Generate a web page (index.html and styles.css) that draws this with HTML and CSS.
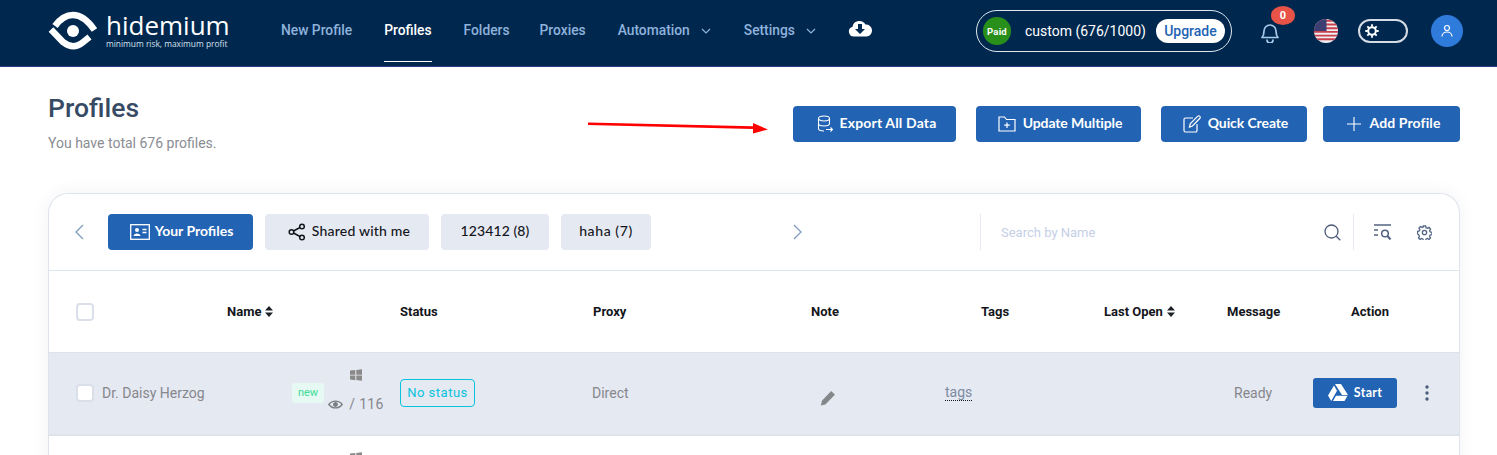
FILE: index.html
```html
<!DOCTYPE html>
<html lang="en">
<head>
<meta charset="utf-8">
<title>Profiles</title>
<link rel="stylesheet" href="styles.css">
</head>
<body>
<header class="topbar">
  <a class="logo">
    <svg class="logo-mark" width="50" height="40" viewBox="0 0 50 40"><path d="M7 15 Q15 4 25 4 Q36 4 46.500 19" fill="none" stroke="#fff" stroke-width="6.500"/><path d="M3 18.500 L15 31 Q25 39 34 32 L41.500 26" fill="none" stroke="#fff" stroke-width="6.500"/><circle cx="25" cy="20" r="6" fill="#fff"/></svg>
    <span class="logo-text"><span class="logo-name">hidemium</span><span class="logo-tag">minimum risk, maximum profit</span></span>
  </a>
  <nav class="nav">
    <a class="nav-item">New Profile</a>
    <a class="nav-item active">Profiles</a>
    <a class="nav-item nav-tight">Folders</a>
    <a class="nav-item">Proxies</a>
    <a class="nav-item nav-wide">Automation<svg class="caret" width="10" height="6" viewBox="0 0 10 6"><path d="M1 1l4 4 4-4" fill="none" stroke="#8fb3dc" stroke-width="1.200"/></svg></a>
    <a class="nav-item">Settings<svg class="caret" width="10" height="6" viewBox="0 0 10 6"><path d="M1 1l4 4 4-4" fill="none" stroke="#8fb3dc" stroke-width="1.200"/></svg></a>
    <svg class="cloud" width="24" height="17" viewBox="0 0 24 17"><path d="M6 16.500a5 5 0 0 1-1.500-9.800A7 7 0 0 1 17.500 4.500 6 6 0 0 1 18.500 16.500z" fill="#fff"/><path d="M10 4h4v5h3l-5 5-5-5h3z" fill="#002a52"/></svg>
  </nav>
  <div class="plan">
    <span class="paid">Paid</span>
    <span class="plan-text">custom (676/1000)</span>
    <span class="upgrade">Upgrade</span>
  </div>
  <div class="bell">
    <svg width="20" height="22" viewBox="0 0 20 22"><path d="M2 16.500c1.500-1.500 2-3 2-6.500a6 6 0 0 1 12 0c0 3.500.5 5 2 6.500z M7 19a3 3 0 0 0 6 0" fill="none" stroke="#a9c9ea" stroke-width="1.700" stroke-linejoin="round" stroke-linecap="round"/></svg>
    <span class="badge">0</span>
  </div>
  <svg class="flag" width="24" height="24" viewBox="0 0 24 24"><defs><clipPath id="flagclip"><circle cx="12" cy="12" r="12"/></clipPath></defs><g clip-path="url(#flagclip)"><rect width="24" height="24" fill="#f1eef0"/><path d="M0 1.800h24M0 5.500h24M0 9.200h24M0 12.900h24M0 16.600h24M0 20.300h24" stroke="#c8404f" stroke-width="1.900"/><rect width="12.500" height="12" fill="#3d3f72"/></g></svg>
  <div class="theme">
    <svg width="14" height="14" viewBox="0 0 14 14"><circle cx="7" cy="7" r="3.800" fill="#00284f" stroke="#fff" stroke-width="2"/><path d="M7 .3v2.400M7 11.300v2.400M.3 7h2.400M11.300 7h2.400M2.300 2.300l1.700 1.700M10 10l1.700 1.700M2.300 11.700l1.700-1.700M10 4l1.700-1.700" stroke="#fff" stroke-width="1.800"/></svg>
  </div>
  <span class="avatar"><svg width="14" height="14" viewBox="0 0 14 14"><circle cx="7" cy="4" r="2.500" fill="none" stroke="#fff" stroke-width="1.200"/><path d="M2 12.500c0-6 10-6 10 0" fill="none" stroke="#fff" stroke-width="1.200"/></svg></span>
</header>

<main class="page">
  <section class="page-head">
    <div class="title-block">
      <h1 class="title">Profiles</h1>
      <p class="subtitle">You have total 676 profiles.</p>
    </div>
    <div class="actions">
      <button class="btn btn-export"><svg width="16" height="18" viewBox="0 0 16 18" fill="none" stroke="#fff" stroke-width="1.100"><ellipse cx="7" cy="3.500" rx="5.500" ry="2.500"/><path d="M1.500 3.500v10c0 1.400 2.500 2.500 5.500 2.500M12.500 3.500v5M1.500 8.500c0 1.400 2.500 2.500 5.500 2.500s5.500-1.100 5.500-2.500"/><path d="M9 14.500h6.500M13.500 12.500l2 2-2 2"/></svg><span class="label">Export All Data</span></button>
      <button class="btn btn-update"><svg width="18" height="16" viewBox="0 0 18 16" fill="none" stroke="#fff" stroke-width="1.200"><path d="M1 15V1h5.500l2 2.500H17V15z"/><path d="M9 6.500v5.500M6.200 9.200h5.600"/></svg><span class="label">Update Multiple</span></button>
      <button class="btn btn-quick"><svg width="18" height="18" viewBox="0 0 18 18" fill="none" stroke="#fff" stroke-width="1.200"><path d="M10 3H2.500A1.500 1.500 0 0 0 1 4.500v11A1.500 1.500 0 0 0 2.500 17h10a1.500 1.500 0 0 0 1.500-1.500V9"/><path d="M6.500 12l.7-3.200L14.800 1.200a1.300 1.300 0 0 1 1.900 0l.2.200a1.300 1.300 0 0 1 0 1.900L9.500 11z"/></svg><span class="label">Quick Create</span></button>
      <button class="btn btn-add"><svg width="14" height="14" viewBox="0 0 14 14"><path d="M7 0v14M0 7h14" stroke="#fff" stroke-width="1.100"/></svg><span class="label">Add Profile</span></button>
    </div>
  </section>

  <section class="card">
    <div class="toolbar">
      <svg class="pager" width="10" height="16" viewBox="0 0 10 16"><path d="M9 1L2 8l7 7" fill="none" stroke="#7f9bc0" stroke-width="1.300"/></svg>
      <div class="tabs">
        <button class="tab tab-active"><svg width="20" height="16" viewBox="0 0 20 16"><rect x=".7" y=".7" width="18.600" height="14.600" fill="none" stroke="#fff" stroke-width="1.300"/><circle cx="7" cy="6" r="2" fill="#fff"/><path d="M3.500 12c0-3.500 7-3.500 7 0z" fill="#fff"/><path d="M12.500 5.500h4M12.500 8.500h4" stroke="#fff" stroke-width="1.300"/></svg><span class="label">Your Profiles</span></button>
        <button class="tab tab-shared"><svg width="18" height="18" viewBox="0 0 18 18" fill="none" stroke="#14161c" stroke-width="1.500"><circle cx="3.500" cy="9" r="2.300"/><circle cx="14" cy="3.500" r="2.300"/><circle cx="14" cy="14.500" r="2.300"/><path d="M5.500 8l6.500-3.500M5.500 10l6.500 3.500"/></svg><span class="label">Shared with me</span></button>
        <button class="tab tab-group"><span class="label">123412 (8)</span></button>
        <button class="tab tab-haha"><span class="label">haha (7)</span></button>
      </div>
      <svg class="pager" width="10" height="16" viewBox="0 0 10 16"><path d="M1 1l7 7-7 7" fill="none" stroke="#7f9bc0" stroke-width="1.300"/></svg>
      <div class="search">
        <input class="search-input" placeholder="Search by Name">
        <svg width="17" height="17" viewBox="0 0 17 17" fill="none" stroke="#4a5c78" stroke-width="1.300"><circle cx="7.500" cy="7.500" r="6.500"/><path d="M12.300 12.300l4 4"/></svg>
      </div>
      <div class="tools">
        <svg width="18" height="16" viewBox="0 0 18 16" fill="none" stroke="#526484" stroke-width="1.500"><path d="M0 1h17M0 6h4M0 11h4"/><circle cx="11" cy="9.500" r="3.300"/><path d="M13.500 12l3 3.500" stroke-width="2"/></svg>
        <svg width="15" height="15" viewBox="0 0 16 16" fill="none" stroke="#526484" stroke-width="1.400"><circle cx="8" cy="8" r="2.300"/><path d="M6.800 1h2.400l.4 1.900 1.500.7 1.700-1 1.600 1.700-1 1.600.7 1.500 1.900.4v2.400l-1.900.4-.7 1.500 1 1.700-1.600 1.600-1.700-1-1.500.7-.4 1.900H6.800l-.4-1.900-1.500-.7-1.700 1-1.600-1.600 1-1.700-.7-1.500L.5 9.200V6.800l1.900-.4.700-1.500-1-1.600 1.600-1.700 1.700 1 1.500-.7z"/></svg>
      </div>
    </div>

    <div class="grid-row head-row">
      <div class="cell"><span class="checkbox"></span></div>
      <div class="cell th-name">Name<svg class="sort" width="8" height="11" viewBox="0 0 8 11"><path d="M4 0l4 4.500H0zM4 11L0 6.500h8z" fill="#1c2027"/></svg></div>
      <div class="cell">Status</div>
      <div class="cell th-proxy">Proxy</div>
      <div class="cell th-note">Note</div>
      <div class="cell th-tags">Tags</div>
      <div class="cell th-open">Last Open<svg class="sort" width="8" height="11" viewBox="0 0 8 11"><path d="M4 0l4 4.500H0zM4 11L0 6.500h8z" fill="#1c2027"/></svg></div>
      <div class="cell th-msg">Message</div>
      <div class="cell th-action">Action</div>
    </div>

    <div class="grid-row data-row selected">
      <div class="cell"><span class="checkbox"></span></div>
      <div class="cell td-name">
        <span class="name">Dr. Daisy Herzog</span>
        <span class="tag-new">new</span>
        <span class="os">
          <svg class="win" width="12" height="12" viewBox="0 0 12 12"><path d="M0 1.500L5.300 1v4.700H0zM6.300 .9L12 .2v5.500H6.300zM0 6.500h5.300v4.700L0 10.600zM6.300 6.500H12v5.300l-5.700-.7z" fill="#8a8a8a"/></svg>
          <span class="os-ver"><svg width="15" height="11" viewBox="0 0 15 11" fill="none" stroke="#7a7f85" stroke-width="1.300"><path d="M.8 5.500C4 1 11 1 14.200 5.500 11 10 4 10 .8 5.500z"/><circle cx="7.500" cy="5.500" r="1.800" fill="#7a7f85"/></svg>/ 116</span>
        </span>
      </div>
      <div class="cell"><span class="status">No status</span></div>
      <div class="cell td-text">Direct</div>
      <div class="cell td-note"><svg width="16" height="16" viewBox="0 0 15 15"><path d="M10.500 1l3.500 3.500L5 13.500 .8 14.500 1.800 10z" fill="#85878a"/></svg></div>
      <div class="cell td-tags"><span class="tags-link">tags</span></div>
      <div class="cell"></div>
      <div class="cell td-msg">Ready</div>
      <div class="cell td-action">
        <button class="start"><svg width="20" height="17" viewBox="0 0 20 17"><path d="M7 0h6l7 11h-6zM6 1.500l3 5.300L3.200 17 0 11.500zM8 11.800h11.500L16.500 17H5z" fill="#fff"/></svg><span class="label-sm">Start</span></button>
        <svg class="more" width="4" height="16" viewBox="0 0 4 16"><circle cx="2" cy="2" r="1.700" fill="#4a5c78"/><circle cx="2" cy="8" r="1.700" fill="#4a5c78"/><circle cx="2" cy="14" r="1.700" fill="#4a5c78"/></svg>
      </div>
    </div>

    <div class="grid-row data-row">
      <div class="cell"></div>
      <div class="cell td-name">
        <span class="name"></span>
        <span class="os">
          <svg class="win" width="12" height="12" viewBox="0 0 12 12"><path d="M0 1.500L5.300 1v4.700H0zM6.300 .9L12 .2v5.500H6.300zM0 6.500h5.300v4.700L0 10.600zM6.300 6.500H12v5.300l-5.700-.7z" fill="#8a8a8a"/></svg>
          <span class="os-ver os-empty"></span>
        </span>
      </div>
    </div>
  </section>

  <svg class="arrow" width="182" height="18" viewBox="0 0 182 18"><path d="M0 3.500L165 7.200 165 4 180 10.500 165 14.500 165 10 0 6z" fill="#f00"/></svg>
</main>
</body>
</html>
```
FILE: styles.css
```css
* { box-sizing: border-box; }
html, body { margin: 0; height: 455px; overflow: hidden; background: #fff; }
body { font-family: Roboto, "Liberation Sans", sans-serif; color: #1c2027; }

.topbar {
  height: 67px;
  background: #00284f;
  border-bottom: 1px solid #2c3e8c;
  display: flex;
  align-items: center;
  padding: 0 0 4px 48px;
}
.logo { display: flex; align-items: center; width: 233px; color: #fff; flex: none; }
.logo-mark { margin-right: 8px; flex: none; }
.logo-text { display: flex; flex-direction: column; width: 124px; margin-top: -3px; }
.logo-name { font-family: "Open Sans", sans-serif; font-weight: 400; font-size: 26px; line-height: 28px; }
.logo-tag { font-family: "Open Sans", sans-serif; font-size: 8.400px; line-height: 10px; color: #d8e0ea; white-space: nowrap; }

.nav { display: flex; align-items: flex-start; align-self: flex-start; height: 62px; width: 695px; flex: none; }
.nav-item {
  font-size: 13.800px; font-weight: 500; color: #8fb3dc;
  margin-right: 32px; height: 62px; padding-bottom: 2px; display: flex; align-items: center;
  border-bottom: 1px solid transparent;
}
.nav-item.active { color: #fff; border-bottom-color: #fff; }
.nav-tight { margin-right: 30px; }
.nav-wide { margin-right: 33px; }
.caret { margin-left: 11px; margin-top: 2px; }
.cloud { margin-top: 20px; }

.plan {
  width: 256px; height: 42px; border: 1px solid #dfe6ee; border-radius: 21px; flex: none;
  display: flex; align-items: center; padding: 0 6px;
}
.paid {
  width: 28px; height: 28px; border-radius: 50%; background: #28901a; color: #fff;
  font-size: 9.500px; font-weight: 700; display: flex; align-items: center; justify-content: center;
  letter-spacing: .2px; flex: none;
}
.plan-text { color: #fff; font-size: 14px; margin-left: 14px; white-space: nowrap; }
.upgrade {
  margin-left: 10px; background: #fff; color: #2263b3; border-radius: 12px; height: 24px; width: 69px; flex: none;
  font-size: 14px; font-weight: 500; display: flex; align-items: center; justify-content: center;
}

.bell { position: relative; margin-left: 28px; width: 20px; height: 22px; margin-top: 1px; flex: none; }
.bell svg { display: block; }
.badge {
  position: absolute; left: 11px; top: -15px; width: 24px; height: 19px; border-radius: 50%;
  background: #e85347; color: #fff; font-size: 11px; font-weight: 700;
  display: flex; align-items: center; justify-content: center;
}
.flag { margin-left: 34px; flex: none; }
.theme {
  margin-left: 20px; width: 50px; height: 24px; border: 2px solid #d5dbe4; border-radius: 12px; flex: none;
  display: flex; align-items: center; padding-left: 5px;
}
.avatar {
  margin-left: 23px; width: 32px; height: 32px; border-radius: 50%; background: #2f7bdc; flex: none;
  display: flex; align-items: center; justify-content: center;
}

.page { padding: 0 37px 0 48px; position: relative; height: 388px; overflow: hidden; }
.page-head { display: flex; justify-content: space-between; height: 126px; }
.title { margin: 26px 0 0; font-size: 26.500px; line-height: 30px; font-weight: 500; color: #364a63; }
.subtitle { margin: 10px 0 0; font-size: 14px; line-height: 20px; color: #8a8d93; }
.actions { display: flex; margin-top: 39px; height: 36px; }
.btn {
  height: 36px; border: 0; border-radius: 4px; background: #2263b3; color: #fff;
  font-family: "Lato", sans-serif; font-weight: 700; font-size: 14px;
  display: flex; align-items: center; justify-content: center; white-space: nowrap;
}
.label { margin-bottom: 4px; }
.label-sm { margin-bottom: 1px; }
.btn-export { width: 163px; gap: 7px; padding: 0 0 0 4px; letter-spacing: .15px; }
.btn-update { width: 165px; gap: 7px; margin-left: 20px; padding: 0 0 0 3px; letter-spacing: -.1px; }
.btn-quick { width: 146px; gap: 7px; margin-left: 20px; padding: 0 0 0 3px; letter-spacing: -.1px; }
.btn-add { width: 137px; gap: 9px; margin-left: 16px; padding: 0 0 0 4px; letter-spacing: .1px; }

.card {
  width: 1412px; border: 1px solid #dfe3ec; border-bottom: 0; border-radius: 20px 20px 0 0;
  box-shadow: 0 0 16px rgba(80, 90, 130, .08); background: #fff;
}
.toolbar {
  height: 77px; border-bottom: 1px solid #dfe5ef; display: flex; align-items: center; padding-left: 25px;
}
.tabs { display: flex; gap: 12px; margin-left: 24px; width: 685px; flex: none; }
.tab {
  height: 36px; border: 0; border-radius: 4px; background: #e5e9f2; color: #14161c;
  font-family: "Lato", sans-serif; font-size: 14px; font-weight: 500; letter-spacing: .2px;
  display: flex; align-items: center; justify-content: center; gap: 6px; padding: 0; white-space: nowrap;
}
.tab-active { width: 145px; background: #2263b3; color: #fff; font-weight: 700; letter-spacing: 0; padding-left: 2px; gap: 5px; }
.tab-shared { width: 164px; padding-left: 4px; }
.tab-group { width: 108px; letter-spacing: .1px; }
.tab-haha { width: 90px; letter-spacing: .6px; }
.search {
  margin-left: 177px; width: 374px; height: 36px; border-left: 1px solid #e5e9f2; border-right: 1px solid #e5e9f2; flex: none;
  display: flex; align-items: center; padding: 0 12px 0 20px;
}
.search-input {
  flex: 1; min-width: 0; border: 0; outline: 0; background: transparent;
  font-family: Roboto, sans-serif; font-size: 13px; padding: 0;
}
.search-input::placeholder { color: #c5cfe6; }
.tools { display: flex; align-items: center; gap: 25px; padding-left: 20px; }

.grid-row {
  display: grid;
  grid-template-columns: 48px 303px 192px 168px 130px 195px 120px 98px 157px;
}
.cell { display: flex; align-items: center; min-width: 0; }
.head-row { height: 81px; font-size: 13px; font-weight: 700; color: #14161c; }
.head-row .cell:first-child, .data-row .cell:first-child { padding-left: 27px; }
.checkbox { width: 18px; height: 18px; border: 2px solid #dbdfea; border-radius: 4px; background: #fff; display: block; }
.sort { margin-left: 4px; }
.th-name { padding-left: 130px; }
.th-proxy { padding-left: 1px; }
.th-note { justify-content: center; }
.th-tags { padding-left: 91px; }
.th-open { padding-left: 19px; }
.th-msg { padding-left: 22px; }
.th-action { padding-left: 48px; }

.data-row { height: 82px; border-top: 1px solid #dde2ec; font-size: 14px; color: #85878c; padding-bottom: 2px; }
.selected { background: #e5e9f2; border-bottom: 1px solid #dde2ec; height: 83px; }
.td-name { padding-left: 5px; padding-right: 17px; }
.name { flex: 1; }
.tag-new {
  width: 32px; height: 20px; border-radius: 3px; background: #e6f9f2; color: #3ddc97;
  font-size: 11px; display: flex; align-items: center; justify-content: center;
}
.os { width: 54px; margin-left: 5px; display: flex; flex-direction: column; align-items: center; gap: 16px; margin-top: -5px; }
.win { display: block; }
.os-ver { display: flex; align-items: center; gap: 6px; white-space: nowrap; line-height: 14px; letter-spacing: .3px; }
.os-empty { height: 14px; }
.status {
  height: 28px; width: 75px; border: 1px solid #09c2de; border-radius: 4px; color: #09c2de;
  font-size: 13px; font-weight: 400; display: flex; align-items: center; justify-content: center; letter-spacing: .5px;
}
.td-note { justify-content: center; padding-top: 10px; padding-left: 6px; }
.td-tags { padding-left: 55px; }
.tags-link { border-bottom: 1px dotted #14161c; color: #7d8ba3; line-height: 15px; }
.td-msg { padding-left: 29px; }
.td-action { padding-left: 10px; }
.start {
  width: 84px; height: 30px; border: 0; border-radius: 3px; background: #2263b3; color: #fff;
  font-family: "Lato", sans-serif; font-size: 12.500px; font-weight: 700; letter-spacing: .3px;
  display: flex; align-items: center; justify-content: center; gap: 6px; padding: 0;
}
.more { margin-left: 28px; }

.arrow { position: absolute; left: 588px; top: 52px; }
```
